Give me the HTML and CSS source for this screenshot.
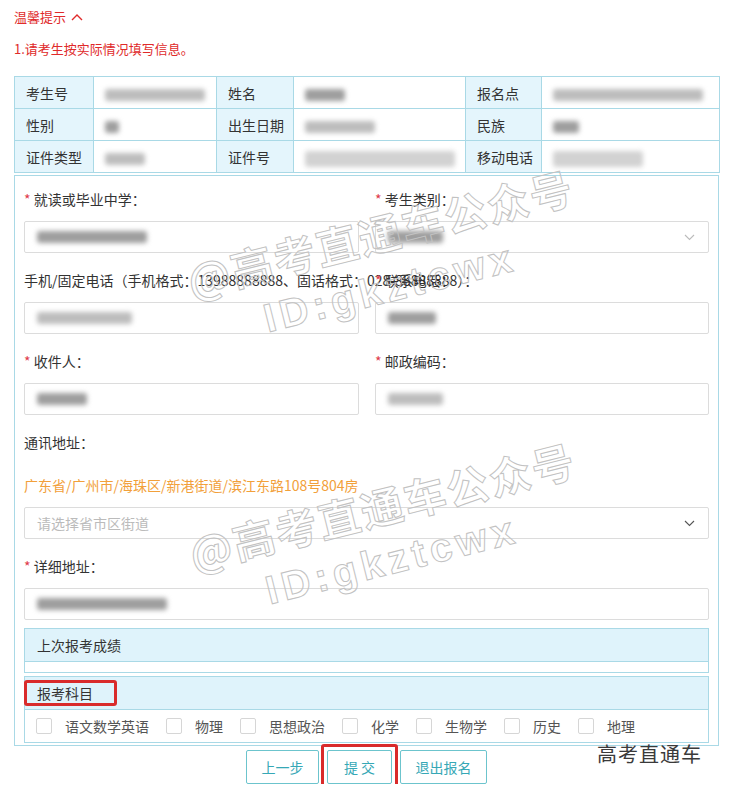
FILE: index.html
```html
<!DOCTYPE html>
<html>
<head>
  <meta charset="utf-8">
  <title>报名信息</title>
  <link rel="stylesheet" href="styles.css">
</head>
<body>
  <div class="page">
    <div class="tips-title">温馨提示
      <svg class="caret" width="12" height="8" viewBox="0 0 12 8"><polyline points="1,7 6,2 11,7" fill="none" stroke="#e02a2a" stroke-width="1.4"/></svg>
    </div>
    <div class="tips-text">1.请考生按实际情况填写信息。</div>

    <table class="info">
      <colgroup>
        <col class="c1"><col class="c2"><col class="c3"><col class="c4"><col class="c5"><col class="c6">
      </colgroup>
      <tr>
        <td class="lbl">考生号</td>
        <td class="val"><span class="blur w100"></span></td>
        <td class="lbl">姓名</td>
        <td class="val"><span class="blur w40 dark"></span></td>
        <td class="lbl">报名点</td>
        <td class="val"><span class="blur w150"></span></td>
      </tr>
      <tr>
        <td class="lbl">性别</td>
        <td class="val"><span class="blur w14 dark"></span></td>
        <td class="lbl">出生日期</td>
        <td class="val"><span class="blur w70"></span></td>
        <td class="lbl">民族</td>
        <td class="val"><span class="blur w26 dark"></span></td>
      </tr>
      <tr>
        <td class="lbl">证件类型</td>
        <td class="val"><span class="blur w40"></span></td>
        <td class="lbl">证件号</td>
        <td class="val"><span class="blur w150 light"></span></td>
        <td class="lbl">移动电话</td>
        <td class="val"><span class="blur w90 light"></span></td>
      </tr>
    </table>

    <div class="form">
      <div class="row">
        <div class="field">
          <label><i>*</i> 就读或毕业中学：</label>
          <div class="input select"><span class="blur w110 dark"></span>
          </div>
        </div>
        <div class="field">
          <label><i>*</i> 考生类别：</label>
          <div class="input select"><span class="blur w55 dark"></span>
            <svg class="arrow faint" width="11" height="7" viewBox="0 0 11 7"><polyline points="1,1 5.5,5.5 10,1" fill="none" stroke="#bbb" stroke-width="1.1"/></svg>
          </div>
        </div>
      </div>

      <div class="row">
        <div class="field">
          <label class="nowrap">手机/固定电话（手机格式：13988888888、固话格式：028-88888888）：</label>
          <div class="input"><span class="blur w95"></span></div>
        </div>
        <div class="field">
          <label><i>*</i> 联系电话：</label>
          <div class="input"><span class="blur w48 dark"></span></div>
        </div>
      </div>

      <div class="row">
        <div class="field">
          <label><i>*</i> 收件人：</label>
          <div class="input"><span class="blur w50 dark"></span></div>
        </div>
        <div class="field">
          <label><i>*</i> 邮政编码：</label>
          <div class="input"><span class="blur w55"></span></div>
        </div>
      </div>

      <div class="field">
        <label>通讯地址：</label>
        <div class="addr">广东省/广州市/海珠区/新港街道/滨江东路108号804房</div>
        <div class="input select">
          <span class="placeholder">请选择省市区街道</span>
          <svg class="arrow" width="11" height="7" viewBox="0 0 11 7"><polyline points="1,1 5.5,5.5 10,1" fill="none" stroke="#555" stroke-width="1.1"/></svg>
        </div>
      </div>

      <div class="field">
        <label><i>*</i> 详细地址：</label>
        <div class="input"><span class="blur w130 dark"></span></div>
      </div>

      <div class="panel">
        <div class="panel-head">上次报考成绩</div>
        <div class="panel-body empty"></div>
      </div>

      <div class="panel">
        <div class="panel-head marked">报考科目</div>
        <div class="subjects">
          <span class="cb"></span><span class="sub">语文数学英语</span>
          <span class="cb"></span><span class="sub">物理</span>
          <span class="cb"></span><span class="sub">思想政治</span>
          <span class="cb"></span><span class="sub">化学</span>
          <span class="cb"></span><span class="sub">生物学</span>
          <span class="cb"></span><span class="sub">历史</span>
          <span class="cb"></span><span class="sub">地理</span>
        </div>
      </div>
    </div>

    <div class="buttons">
      <button class="btn w-prev">上一步</button>
      <button class="btn w-submit boxed">提 交</button>
      <button class="btn w-quit">退出报名</button>
    </div>

    <!-- watermark overlays -->
    <div class="wm wm-1a">@高考直通车公众号</div>
    <div class="wm wm-1b">ID:gkztcwx</div>
    <div class="wm wm-2a">@高考直通车公众号</div>
    <div class="wm wm-2b">ID:gkztcwx</div>
    <div class="brand">高考直通车</div>
  </div>
</body>
</html>
```

FILE: styles.css
```css
body {
  margin: 0;
  font-family: "Noto Sans CJK SC", "Noto Sans", sans-serif;
  font-size: 14px;
  color: #333;
  background: #fff;
}

.page {
  position: relative;
  width: 705px;
  padding: 8px 16px 0 14px;
}

.tips-title {
  color: #e02a2a;
  font-size: 13px;
  line-height: 18px;
  display: flex;
  align-items: center;
  gap: 5px;
}

.tips-text {
  color: #e02a2a;
  font-size: 13px;
  line-height: 18px;
  margin-top: 14px;
}

/* info table */
table.info {
  margin-top: 18px;
  width: 705px;
  border-collapse: collapse;
  table-layout: fixed;
}

table.info td {
  border: 1px solid #a9d9e6;
  height: 31px;
  padding: 0 0 0 11px;
  font-size: 14px;
  line-height: 20px;
  overflow: hidden;
}

table.info td.lbl {
  background: #e4f5fc;
}

.c1 { width: 79px; }
.c2 { width: 123px; }
.c3 { width: 77px; }
.c4 { width: 172px; }
.c5 { width: 76px; }
.c6 { width: 178px; }

.blur {
  display: inline-block;
  height: 12px;
  background: #bdbdbd;
  border-radius: 3px;
  filter: blur(2.5px);
  vertical-align: middle;
}

.blur.dark { background: #9e9e9e; }
.blur.light { background: #d2d2d2; height: 16px; }

.w14 { width: 14px; }
.w26 { width: 26px; }
.w40 { width: 40px; }
.w48 { width: 48px; }
.w50 { width: 50px; }
.w55 { width: 55px; }
.w70 { width: 70px; }
.w90 { width: 90px; }
.w95 { width: 95px; }
.w100 { width: 100px; }
.w110 { width: 110px; }
.w130 { width: 130px; }
.w150 { width: 150px; }

/* form */
.form {
  margin-top: 2px;
  border: 1px solid #a9d9e6;
  padding: 13px 9px 2px;
}

.row {
  display: grid;
  grid-template-columns: 335px 334px;
  column-gap: 16px;
}

.field {
  margin-bottom: 17px;
}

.field label {
  display: block;
  line-height: 20px;
  margin-bottom: 12px;
  color: #333;
}

.field label.nowrap {
  white-space: nowrap;
}

.field label i {
  color: #e03a4a;
  font-style: normal;
}

.input {
  position: relative;
  height: 30px;
  border: 1px solid #dcdcdc;
  border-radius: 2px;
  display: flex;
  align-items: center;
  padding: 0 12px;
}

.placeholder {
  color: #bbb;
}

.arrow {
  position: absolute;
  right: 13px;
  top: 12px;
}

.addr {
  color: #f2a03a;
  line-height: 20px;
  padding-top: 11px;
  margin-bottom: 12px;
}

/* panels */
.panel {
  border: 1px solid #a9d9e6;
  margin-top: -9px;
  margin-bottom: 3px;
}

.panel + .panel {
  margin-top: 0;
  margin-bottom: 0;
}

.panel-head {
  position: relative;
  background: #dff3fb;
  height: 32px;
  line-height: 32px;
  padding-left: 12px;
  border-bottom: 1px solid #a9d9e6;
}

.panel-body.empty {
  height: 10px;
}

.marked::after {
  content: "";
  position: absolute;
  left: -1px;
  top: 3px;
  width: 93px;
  height: 26px;
  box-sizing: border-box;
  border: 3px solid #d92b2b;
  border-radius: 3px;
}

.subjects {
  height: 32px;
  display: flex;
  align-items: center;
  padding-left: 11px;
  color: #555;
}

.cb {
  width: 14px;
  height: 14px;
  border: 1px solid #d6d6d6;
  border-radius: 2px;
  margin-right: 13px;
  background: #fff;
}

.sub {
  margin-right: 17px;
}

/* buttons */
.buttons {
  display: flex;
  justify-content: center;
  gap: 8px;
  margin-top: 4px;
}

.btn {
  position: relative;
  height: 34px;
  background: #fff;
  border: 1px solid #6cc4cd;
  border-radius: 2px;
  color: #36a8b6;
  font-family: "Noto Sans CJK SC", sans-serif;
  font-size: 14px;
  padding: 0;
}

.w-prev { width: 73px; }
.w-submit { width: 65px; }
.w-quit { width: 87px; }

.boxed::after {
  content: "";
  position: absolute;
  left: -7px;
  top: -7px;
  right: -7px;
  bottom: -7px;
  border: 3px solid #d92b2b;
  border-radius: 3px;
}

/* watermarks */
.wm {
  position: absolute;
  transform: translate(-50%, -50%) rotate(-14deg);
  white-space: nowrap;
  color: transparent;
  -webkit-text-stroke: 1px #c2c2c2;
  font-weight: bold;
  pointer-events: none;
}

.wm-1a, .wm-2a {
  font-size: 42px;
  letter-spacing: 2px;
}

.wm-1b, .wm-2b {
  font-family: "Liberation Sans", sans-serif;
  font-size: 40px;
  letter-spacing: 5px;
}

.wm-1a { left: 380px; top: 232px; }
.wm-1b { left: 390px; top: 288px; }
.wm-2a { left: 382px; top: 505px; }
.wm-2b { left: 392px; top: 560px; }

.brand {
  position: absolute;
  left: 597px;
  top: 741px;
  font-size: 20px;
  line-height: 26px;
  color: #3a3a3a;
  letter-spacing: 1px;
}
```
